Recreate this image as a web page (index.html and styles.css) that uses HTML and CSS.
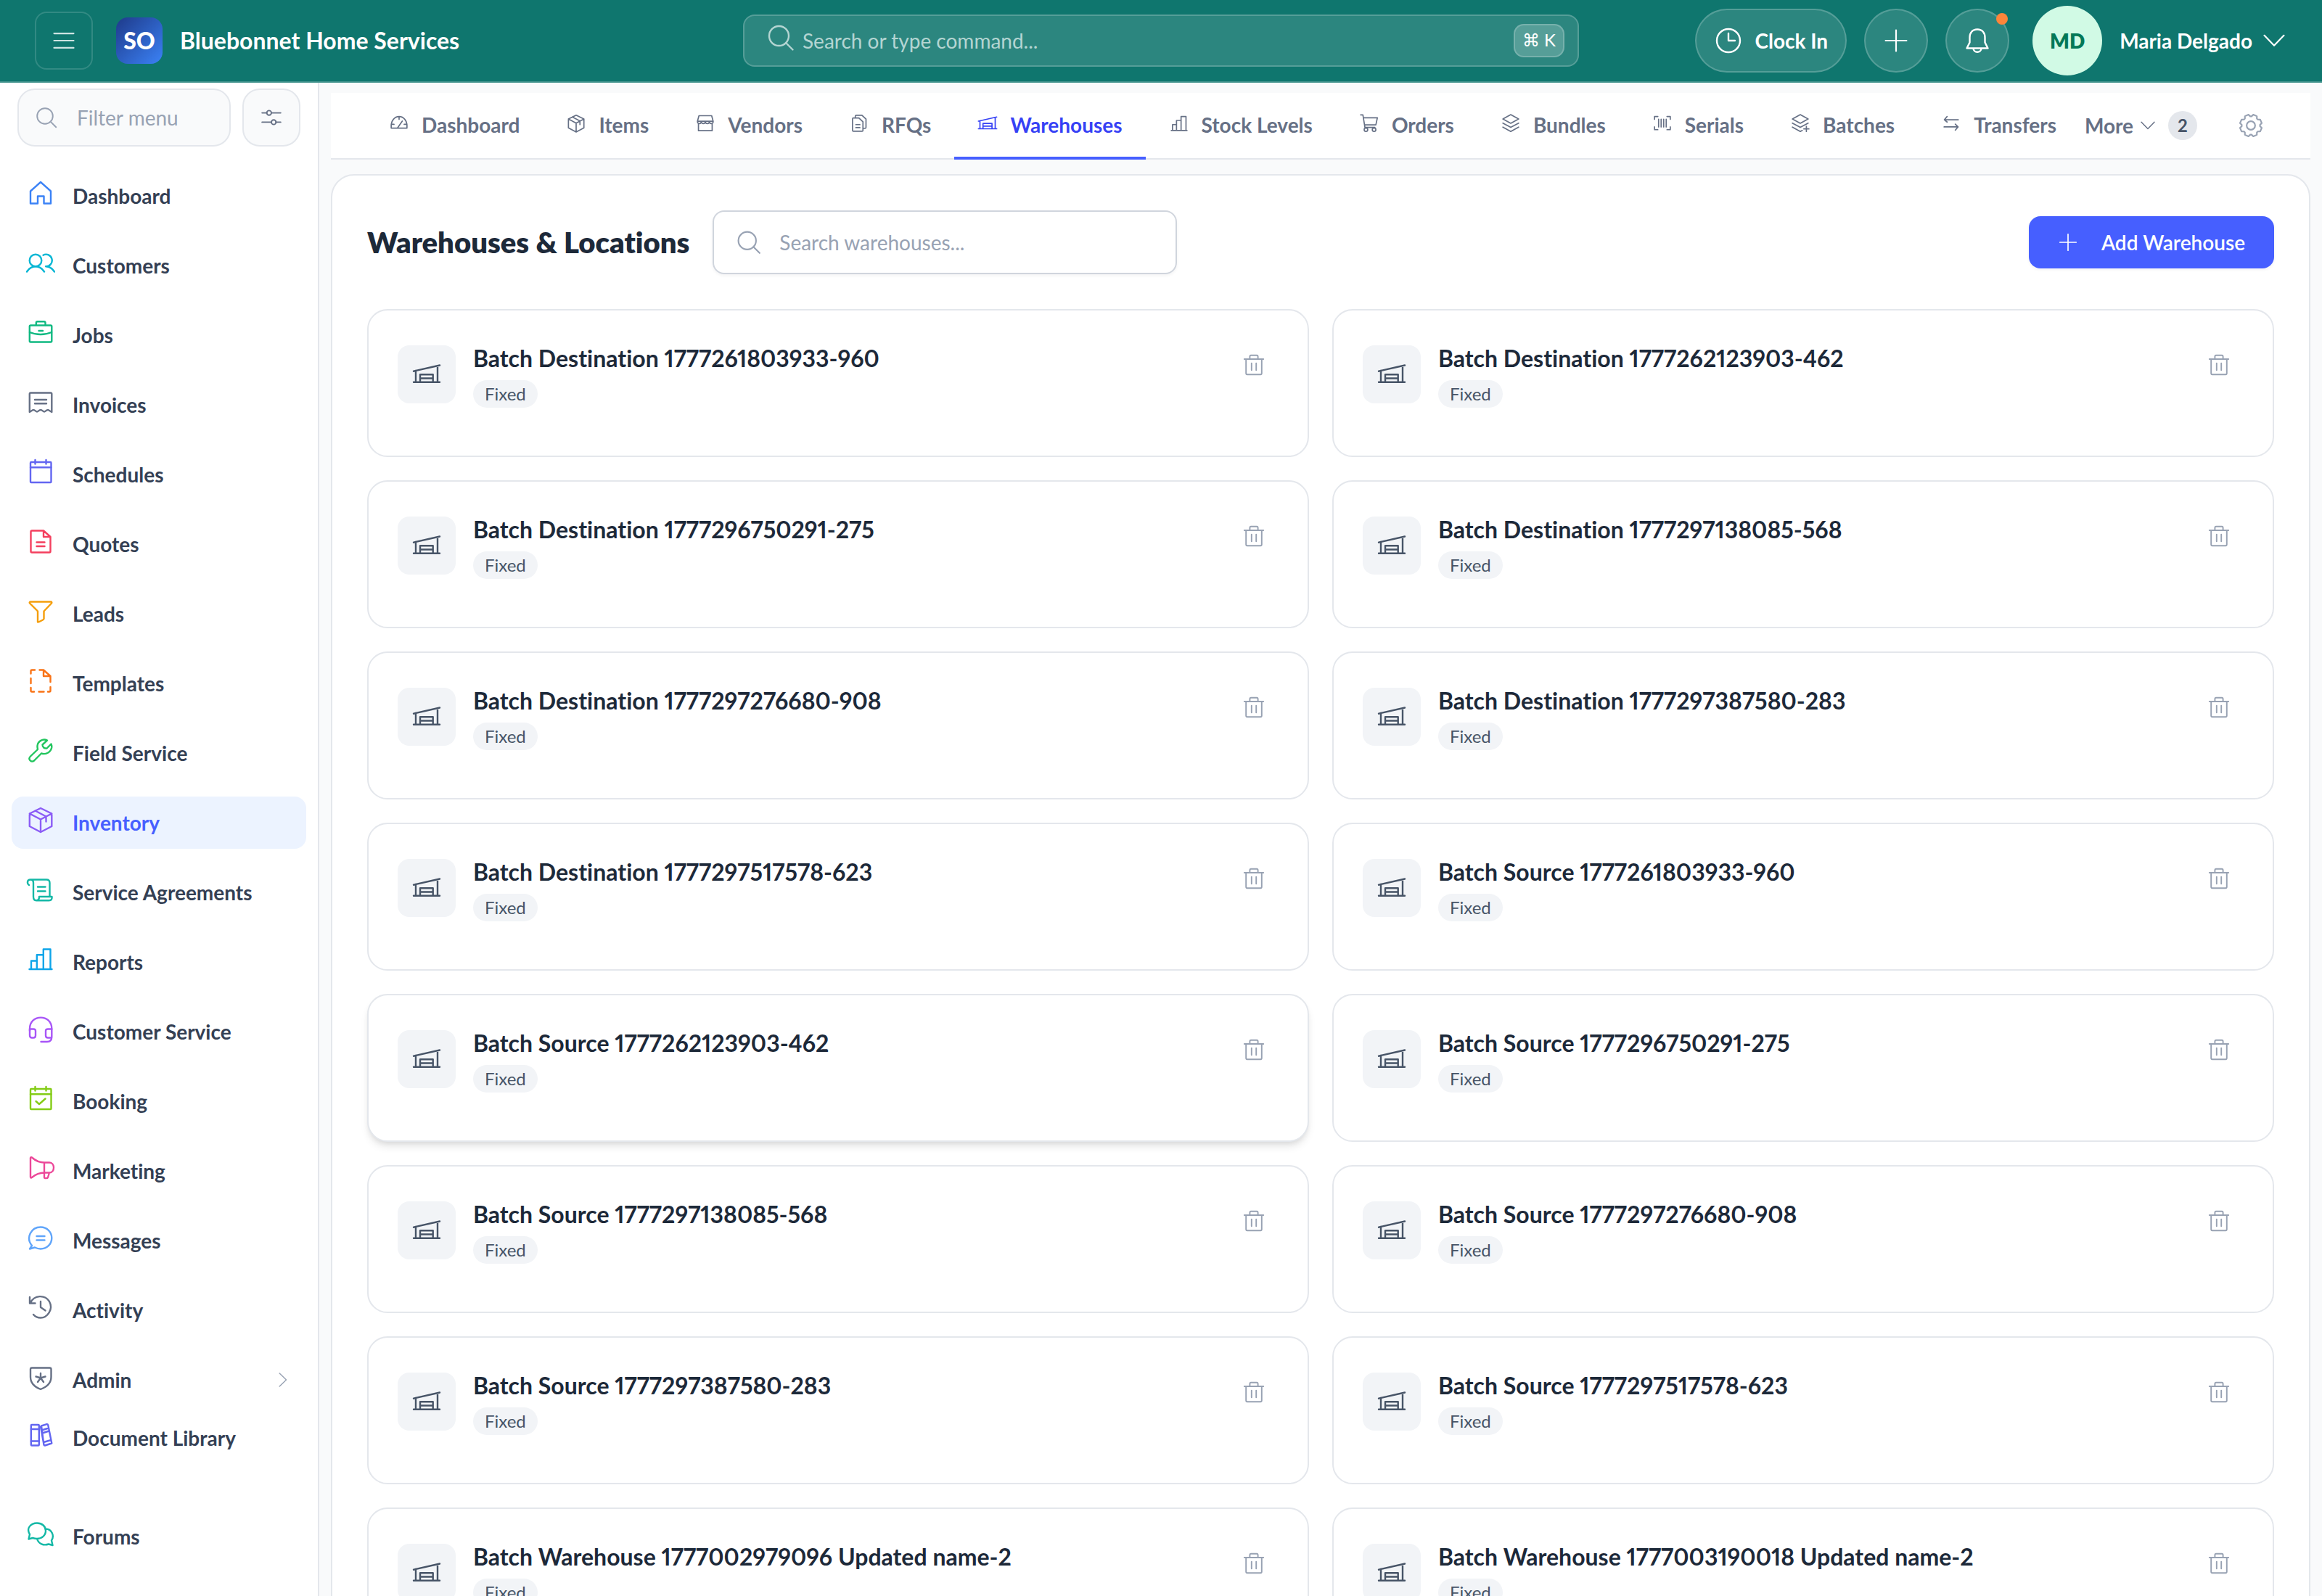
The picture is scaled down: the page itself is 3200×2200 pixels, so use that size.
FILE: index.html
```html
<!DOCTYPE html>
<html lang="en">
<head>
  <meta charset="UTF-8">
  <meta name="viewport" content="width=device-width, initial-scale=1">
  <title>Warehouses &amp; Locations</title>
  <link rel="stylesheet" href="styles.css">
</head>
<body>

<!-- icon sprite, every icon is drawn on a 40x40 box -->
<svg class="sprite" aria-hidden="true">
  <symbol id="i-menu" viewBox="0 0 40 40"><path d="M5 9H35M5 20H35M5 31H35"/></symbol>
  <symbol id="i-search" viewBox="0 0 40 40"><circle cx="17.500" cy="17.500" r="13.500"/><path d="M27 27L36.500 36.500"/></symbol>
  <symbol id="i-plus" viewBox="0 0 40 40"><path d="M20 4V36M4 20H36"/></symbol>
  <symbol id="i-clock" viewBox="0 0 40 40"><circle cx="20" cy="20" r="16"/><path d="M20 10V20H29"/></symbol>
  <symbol id="i-bell" viewBox="0 0 40 40"><path d="M20 4.500C13 4.500 9.500 9.500 9.500 15.500V22.500L5.500 30.500H34.500L30.500 22.500V15.500C30.500 9.500 27 4.500 20 4.500ZM14.500 30.500C14.500 37.500 25.500 37.500 25.500 30.500"/></symbol>
  <symbol id="i-down" viewBox="0 0 40 40"><path d="M5 12L20 27.500L35 12"/></symbol>
  <symbol id="i-right" viewBox="0 0 40 40"><path d="M12 5L27.500 20L12 35"/></symbol>
  <symbol id="i-sliders" viewBox="0 0 40 40"><path d="M4 12H12M20 12H36M4 28H20M28 28H36"/><circle cx="16" cy="12" r="4"/><circle cx="24" cy="28" r="4"/></symbol>
  <symbol id="i-home" viewBox="0 0 40 40"><path d="M6 34.500V17.500L20 5L34 17.500V34.500H24.500V24.500H16V34.500Z"/></symbol>
  <symbol id="i-users" viewBox="0 0 40 40"><circle cx="13" cy="17" r="8.300"/><path d="M1 32.500C4 28 8 25.300 13 25.300S22 28 25 32.500M23.500 9.700A8.300 8.300 0 1 1 27 25.300C32 25.300 36 28 39 32.500"/></symbol>
  <symbol id="i-case" viewBox="0 0 40 40"><rect x="4.800" y="10.500" width="30.500" height="23" rx="1.500"/><path d="M13.800 10V7C13.800 6 14.500 5.300 15.500 5.300H24.800C25.800 5.300 26.500 6 26.500 7V10M5 20C14 24 26 24 35 20M17.500 18H23"/></symbol>
  <symbol id="i-invoice" viewBox="0 0 40 40"><path d="M4.800 34V9C4.800 8 5.500 7.500 6.300 7.500H33.800C34.800 7.500 35.300 8 35.300 9V34C33 33 31.500 31 30 31C28 31 26.500 33.500 25 33.500C23.500 33.500 22 31 20 31C18 31 16.500 33.500 15 33.500C13.500 33.500 12 31 10 31C8.500 31 7 33 4.800 34ZM12 17H28M12 22.300H28"/></symbol>
  <symbol id="i-calendar" viewBox="0 0 40 40"><rect x="6" y="7" width="28.500" height="28" rx="1"/><path d="M6 14.300H34.500M12.500 4V9.500M27.500 4V9.500"/></symbol>
  <symbol id="i-calcheck" viewBox="0 0 40 40"><rect x="6" y="7" width="28.500" height="28" rx="1"/><path d="M6 14.300H34.500M12.500 4V9.500M27.500 4V9.500M13.500 24L18 28L26.500 20.500"/></symbol>
  <symbol id="i-doc" viewBox="0 0 40 40"><path d="M8 5.500H24L33.500 14V34C33.500 35 33 35.500 32 35.500H8C7 35.500 6.500 35 6.500 34V7C6.500 6 7 5.500 8 5.500ZM24 5.500V14H33.500M14.500 21.500H25.500M14.500 27H25.500"/></symbol>
  <symbol id="i-funnel" viewBox="0 0 40 40"><path d="M6 7.500H34.500C35.500 7.500 35.500 9 35 9.500L24.500 20.500V31C24.500 32 17 36 16 35.500V20.500L5 9.500C4.500 9 4.500 7.500 6 7.500Z"/></symbol>
  <symbol id="i-template" viewBox="0 0 40 40"><path d="M12 5.500H8C7 5.500 6.500 6 6.500 7V10.500M6.500 17V24M6.500 30V34C6.500 35 7 35.500 8 35.500H11M17.500 35.500H24.500M30 35.500H32C33 35.500 33.500 35 33.500 34V29M33.500 22V14L24 5.500H18.500M24 5.500V14H33.500"/></symbol>
  <symbol id="i-wrench" viewBox="0 0 40 40"><path d="M29 6.500C23 3.500 16 8 15.500 14C15.300 16 15.800 17.500 16 19L6 28.500C2 32.500 7 38 11 34.500L21 24.500C27 26.500 34 23 35.200 16.500C35.500 14 35 12.500 34.500 11.500L28.500 17.500C25 18 22.500 16 22.500 12.500Z"/></symbol>
  <symbol id="i-box" viewBox="0 0 40 40"><path d="M20 4L35.300 11.500V29L20 37L4.800 29V11.500ZM4.800 11.500L20 19.500L35.300 11.500M20 19.500V37M12.500 7.500L27.500 15.500V22.500"/></symbol>
  <symbol id="i-scroll" viewBox="0 0 40 40"><path d="M4 14C1 12 1 6.500 6 6.500H28C31 6.500 32.500 8 32.500 11V29.500M6 6.500C8.500 6.500 10 8 10 11V30C10 33 11 35.300 14 35.300H31.500C35 35.300 36 33 35.500 30H18C18 33 17 35.300 14 35.300M16 16.500H26.500M16 22.500H26.500"/></symbol>
  <symbol id="i-chart" viewBox="0 0 40 40"><path d="M4.500 34H35.500M7 34V22.500H14.800M14.800 34V14.300H23.800M23.800 34V6.500H33.500V34"/></symbol>
  <symbol id="i-headset" viewBox="0 0 40 40"><path d="M5 23V20C5 -0.500 35.300 -0.500 35.300 20V31C35.300 35.500 33 38 29 38H20.500"/><path d="M5 20.500H10C12 20.500 13 21.500 13 23V29.500C13 31.500 12 32.500 10 32.500H8C6 32.500 5 31 5 29ZM35.300 20.500H30C28 20.500 27 21.500 27 23V29.500C27 31.500 28 32.500 30 32.500H35"/></symbol>
  <symbol id="i-horn" viewBox="0 0 40 40"><path d="M6 6C6 5 7.500 5 8 5.500C14 11 20 12.500 25 12.500H32C40 12.500 40 26.500 32 26.500H25C20 26.500 14 28 8 33C7 34 6 33.500 6 32.500ZM25 12.500V33C25 34.500 29.500 34.500 30 33L32 26.500"/></symbol>
  <symbol id="i-message" viewBox="0 0 40 40"><path d="M8 31C-1 20 7 5.500 20 5.500C28.500 5.500 35.300 12 35.300 20.500C35.300 29 28.500 35.500 20 35.500C16.500 35.500 14 34.500 12 33.500L5 35.500ZM14.500 18H25.500M14.500 23.500H25.500"/></symbol>
  <symbol id="i-history" viewBox="0 0 40 40"><path d="M5 6V14.500H12.500M6 14C11 2.500 26 2.500 32 12C38 23 29 34.500 20 34.500C16 34.500 12.500 33 10 30M20 12V20L26.500 24.500"/></symbol>
  <symbol id="i-shield" viewBox="0 0 40 40"><path d="M6 9.500C6 8 6.500 7.500 8 7.500H32.500C34 7.500 34.500 8 34.500 9.500V20C34.500 29 28 34 20 37C12 34 6 29 6 20ZM20 15V21.500M13.500 19.500L20 21.500L26.500 19.500M16 27L20 21.500L24 27"/></symbol>
  <symbol id="i-books" viewBox="0 0 40 40"><rect x="6.800" y="6" width="11" height="28.500" rx="1"/><path d="M6.800 12H18M6.800 28.500H18M21 7.500L28.500 5.200C29.500 5 30 5.500 30.300 6.500L35.300 31.500L26 34.500C25 34.800 24.500 34 24.300 33ZM20 8.500L24.500 33.500M21.500 13.500L31 10.500M22.500 17.500L31.500 14.500M24 30L34.500 27"/></symbol>
  <symbol id="i-forum" viewBox="0 0 40 40"><path d="M5 21C-0.500 12 7 5.500 15 5.500C22 5.500 27 10 27 16C27 23 21 27 15 27C12 27 10.500 26.500 9 26L3.500 27.500ZM27 13.500C35 13.500 39.500 23 35 29.500L36.500 36L31 34.500C24 37 17 34 15 27"/></symbol>
  <symbol id="i-gauge" viewBox="0 0 40 40"><path d="M4.500 29.500C2 -1 38 -1 35.500 29.500ZM20 6.500V12M4.500 22H10M30 22H35.500M17 29L26.500 15.500"/></symbol>
  <symbol id="i-store" viewBox="0 0 40 40"><path d="M7.500 5H32.500L35.500 16C35.500 22 28 22 28 16C28 22 20 22 20 16C20 22 12 22 12 16C12 22 4.500 22 4.500 16ZM4.500 16H35.500M6.500 20V34.500H33.500V20"/></symbol>
  <symbol id="i-copy" viewBox="0 0 40 40"><path d="M8.500 9.500H19.500L27.500 17V34C27.500 35 27 35.500 26 35.500H8.500C7.500 35.500 7 35 7 34V11C7 10 7.500 9.500 8.500 9.500ZM12.500 9V6C12.500 5 13 4 14.500 4H25.500L33.500 11.500V28C33.500 29 33 30 31.500 30H28M13.500 22.500H21.500M13.500 28.500H21.500"/></symbol>
  <symbol id="i-warehouse" viewBox="0 0 40 40"><path d="M2 15.700L38 7.500M5 15V30.700M35 8.500V30.700M2 30.700H38M11 30.700V20.300H28.700V30.700M11 25.500H28.700"/></symbol>
  <symbol id="i-cart" viewBox="0 0 40 40"><path d="M3 3.300H7.500L11.500 28H31M8.500 9H36L33 23H10.800"/><circle cx="13.500" cy="32.500" r="3.500"/><circle cx="29.500" cy="32.500" r="3.500"/></symbol>
  <symbol id="i-layers" viewBox="0 0 40 40"><path d="M20 3L35.500 11.500L20 20L4.500 11.500ZM4.500 19.500L20 28L35.500 19.500M4.500 27.500L20 36L35.500 27.500"/></symbol>
  <symbol id="i-barcode" viewBox="0 0 40 40"><path d="M4.500 12V6.500H11M29 6.500H35.500V12M4.500 27V32.500H11M29 32.500H35.500V27M12.500 12V27M17.500 12V27M22.500 12V27M27.500 12V27"/></symbol>
  <symbol id="i-layersplus" viewBox="0 0 40 40"><path d="M20 3L35.500 11.500L20 20L4.500 11.500ZM4.500 19.500L20 28L35.500 19.500M4.500 27.500L20 36L24 34M32 26V36M27 31H37"/></symbol>
  <symbol id="i-swap" viewBox="0 0 40 40"><path d="M34 13H6.500M12 6.500L6.500 13L12 17.500M6 27H33.500M28 21.500L33.500 27L28 33.500"/></symbol>
  <symbol id="i-gear" viewBox="0 0 40 40"><circle cx="20" cy="20" r="6.500"/><path d="M21 6L23.700 3.400L29.100 5.700L29.200 9.400L30.600 10.800L34.300 10.900L36.600 16.300L34 19V21L36.600 23.700L34.300 29.100L30.600 29.200L29.200 30.600L29.100 34.300L23.700 36.600L21 34H19L16.300 36.600L10.900 34.300L10.800 30.600L9.400 29.200L5.700 29.100L3.400 23.700L6 21V19L3.400 16.300L5.700 10.900L9.400 10.800L10.800 9.400L10.900 5.700L16.300 3.400L19 6Z"/></symbol>
  <symbol id="i-trash" viewBox="0 0 40 40"><path d="M3.500 10H36.500M6.500 10V34.500C6.500 35.500 7 36.500 8.500 36.500H31.500C33 36.500 33.500 35.500 33.500 34.500V10M13 10V6C13 4.500 13.500 3.500 15 3.500H25C26.500 3.500 27 4.500 27 6V10M16 17V29M24 17V29"/></symbol>
</svg>

<header class="topbar">
  <div class="brand">
    <button class="menu-btn" aria-label="Toggle menu"><svg class="icon md"><use href="#i-menu"/></svg></button>
    <div class="logo">SO</div>
    <span class="brand-name">Bluebonnet Home Services</span>
  </div>
  <label class="command">
    <svg class="icon lg raised"><use href="#i-search"/></svg>
    <input type="text" placeholder="Search or type command..." aria-label="Search or type command">
    <kbd>⌘ K</kbd>
  </label>
  <div class="actions">
    <button class="pill clock"><svg class="icon lg"><use href="#i-clock"/></svg>Clock In</button>
    <button class="pill round" aria-label="Add"><svg class="icon md"><use href="#i-plus"/></svg></button>
    <button class="pill round" aria-label="Notifications"><svg class="icon lg"><use href="#i-bell"/></svg><span class="dot"></span></button>
    <button class="user"><span class="avatar">MD</span>Maria Delgado<svg class="icon md"><use href="#i-down"/></svg></button>
  </div>
</header>

<div class="layout">
  <aside class="sidebar">
    <div class="filter">
      <label class="filter-box">
        <svg class="icon sm"><use href="#i-search"/></svg>
        <input type="text" placeholder="Filter menu" aria-label="Filter menu">
      </label>
      <button class="filter-btn" aria-label="Menu options"><svg class="icon sm"><use href="#i-sliders"/></svg></button>
    </div>
    <nav class="nav">
      <a href="#"><svg class="icon lg c-blue"><use href="#i-home"/></svg>Dashboard</a>
      <a href="#"><svg class="icon lg c-cyan"><use href="#i-users"/></svg>Customers</a>
      <a href="#"><svg class="icon lg c-emerald"><use href="#i-case"/></svg>Jobs</a>
      <a href="#"><svg class="icon lg c-gray"><use href="#i-invoice"/></svg>Invoices</a>
      <a href="#"><svg class="icon lg c-indigo"><use href="#i-calendar"/></svg>Schedules</a>
      <a href="#"><svg class="icon lg c-rose"><use href="#i-doc"/></svg>Quotes</a>
      <a href="#"><svg class="icon lg c-amber"><use href="#i-funnel"/></svg>Leads</a>
      <a href="#"><svg class="icon lg c-orange"><use href="#i-template"/></svg>Templates</a>
      <a href="#"><svg class="icon lg c-green"><use href="#i-wrench"/></svg>Field Service</a>
      <a href="#" class="active"><svg class="icon lg c-violet"><use href="#i-box"/></svg>Inventory</a>
      <a href="#"><svg class="icon lg c-teal"><use href="#i-scroll"/></svg>Service Agreements</a>
      <a href="#"><svg class="icon lg c-sky"><use href="#i-chart"/></svg>Reports</a>
      <a href="#"><svg class="icon lg c-purple"><use href="#i-headset"/></svg>Customer Service</a>
      <a href="#"><svg class="icon lg c-lime"><use href="#i-calcheck"/></svg>Booking</a>
      <a href="#"><svg class="icon lg c-pink"><use href="#i-horn"/></svg>Marketing</a>
      <a href="#"><svg class="icon lg c-light"><use href="#i-message"/></svg>Messages</a>
      <a href="#"><svg class="icon lg c-gray"><use href="#i-history"/></svg>Activity</a>
      <a href="#" class="tight"><svg class="icon lg c-gray"><use href="#i-shield"/></svg>Admin<svg class="icon xs caret"><use href="#i-right"/></svg></a>
      <a href="#" class="last"><svg class="icon lg c-indigo"><use href="#i-books"/></svg>Document Library</a>
      <a href="#"><svg class="icon lg c-teal"><use href="#i-forum"/></svg>Forums</a>
    </nav>
  </aside>

  <main class="main">
    <div class="tabbar">
      <nav class="tabs">
        <a href="#"><svg class="icon tab"><use href="#i-gauge"/></svg>Dashboard</a>
        <a href="#"><svg class="icon tab"><use href="#i-box"/></svg>Items</a>
        <a href="#"><svg class="icon tab"><use href="#i-store"/></svg>Vendors</a>
        <a href="#"><svg class="icon tab"><use href="#i-copy"/></svg>RFQs</a>
        <a href="#" class="active"><svg class="icon tab"><use href="#i-warehouse"/></svg>Warehouses</a>
        <a href="#"><svg class="icon tab"><use href="#i-chart"/></svg>Stock Levels</a>
        <a href="#"><svg class="icon tab"><use href="#i-cart"/></svg>Orders</a>
        <a href="#"><svg class="icon tab"><use href="#i-layers"/></svg>Bundles</a>
        <a href="#"><svg class="icon tab"><use href="#i-barcode"/></svg>Serials</a>
        <a href="#"><svg class="icon tab"><use href="#i-layersplus"/></svg>Batches</a>
        <a href="#"><svg class="icon tab"><use href="#i-swap"/></svg>Transfers</a>
      </nav>
      <button class="more">More<svg class="icon xs"><use href="#i-down"/></svg><span class="count">2</span></button>
      <button class="settings" aria-label="Settings"><svg class="icon md"><use href="#i-gear"/></svg></button>
    </div>

    <section class="panel">
      <div class="panel-head">
        <h1>Warehouses &amp; Locations</h1>
        <label class="search">
          <svg class="icon md"><use href="#i-search"/></svg>
          <input type="text" placeholder="Search warehouses..." aria-label="Search warehouses">
        </label>
        <button class="add-btn"><svg class="icon tab"><use href="#i-plus"/></svg>Add Warehouse</button>
      </div>

      <div class="cards">
        <article class="card">
          <div class="tile"><svg class="icon lg"><use href="#i-warehouse"/></svg></div>
          <div class="info"><h2>Batch Destination 1777261803933-960</h2><span class="tag">Fixed</span></div>
          <button class="trash" aria-label="Delete"><svg class="icon sm"><use href="#i-trash"/></svg></button>
        </article>
        <article class="card">
          <div class="tile"><svg class="icon lg"><use href="#i-warehouse"/></svg></div>
          <div class="info"><h2>Batch Destination 1777262123903-462</h2><span class="tag">Fixed</span></div>
          <button class="trash" aria-label="Delete"><svg class="icon sm"><use href="#i-trash"/></svg></button>
        </article>
        <article class="card">
          <div class="tile"><svg class="icon lg"><use href="#i-warehouse"/></svg></div>
          <div class="info"><h2>Batch Destination 1777296750291-275</h2><span class="tag">Fixed</span></div>
          <button class="trash" aria-label="Delete"><svg class="icon sm"><use href="#i-trash"/></svg></button>
        </article>
        <article class="card">
          <div class="tile"><svg class="icon lg"><use href="#i-warehouse"/></svg></div>
          <div class="info"><h2>Batch Destination 1777297138085-568</h2><span class="tag">Fixed</span></div>
          <button class="trash" aria-label="Delete"><svg class="icon sm"><use href="#i-trash"/></svg></button>
        </article>
        <article class="card">
          <div class="tile"><svg class="icon lg"><use href="#i-warehouse"/></svg></div>
          <div class="info"><h2>Batch Destination 1777297276680-908</h2><span class="tag">Fixed</span></div>
          <button class="trash" aria-label="Delete"><svg class="icon sm"><use href="#i-trash"/></svg></button>
        </article>
        <article class="card">
          <div class="tile"><svg class="icon lg"><use href="#i-warehouse"/></svg></div>
          <div class="info"><h2>Batch Destination 1777297387580-283</h2><span class="tag">Fixed</span></div>
          <button class="trash" aria-label="Delete"><svg class="icon sm"><use href="#i-trash"/></svg></button>
        </article>
        <article class="card">
          <div class="tile"><svg class="icon lg"><use href="#i-warehouse"/></svg></div>
          <div class="info"><h2>Batch Destination 1777297517578-623</h2><span class="tag">Fixed</span></div>
          <button class="trash" aria-label="Delete"><svg class="icon sm"><use href="#i-trash"/></svg></button>
        </article>
        <article class="card">
          <div class="tile"><svg class="icon lg"><use href="#i-warehouse"/></svg></div>
          <div class="info"><h2>Batch Source 1777261803933-960</h2><span class="tag">Fixed</span></div>
          <button class="trash" aria-label="Delete"><svg class="icon sm"><use href="#i-trash"/></svg></button>
        </article>
        <article class="card hovered">
          <div class="tile"><svg class="icon lg"><use href="#i-warehouse"/></svg></div>
          <div class="info"><h2>Batch Source 1777262123903-462</h2><span class="tag">Fixed</span></div>
          <button class="trash" aria-label="Delete"><svg class="icon sm"><use href="#i-trash"/></svg></button>
        </article>
        <article class="card">
          <div class="tile"><svg class="icon lg"><use href="#i-warehouse"/></svg></div>
          <div class="info"><h2>Batch Source 1777296750291-275</h2><span class="tag">Fixed</span></div>
          <button class="trash" aria-label="Delete"><svg class="icon sm"><use href="#i-trash"/></svg></button>
        </article>
        <article class="card">
          <div class="tile"><svg class="icon lg"><use href="#i-warehouse"/></svg></div>
          <div class="info"><h2>Batch Source 1777297138085-568</h2><span class="tag">Fixed</span></div>
          <button class="trash" aria-label="Delete"><svg class="icon sm"><use href="#i-trash"/></svg></button>
        </article>
        <article class="card">
          <div class="tile"><svg class="icon lg"><use href="#i-warehouse"/></svg></div>
          <div class="info"><h2>Batch Source 1777297276680-908</h2><span class="tag">Fixed</span></div>
          <button class="trash" aria-label="Delete"><svg class="icon sm"><use href="#i-trash"/></svg></button>
        </article>
        <article class="card">
          <div class="tile"><svg class="icon lg"><use href="#i-warehouse"/></svg></div>
          <div class="info"><h2>Batch Source 1777297387580-283</h2><span class="tag">Fixed</span></div>
          <button class="trash" aria-label="Delete"><svg class="icon sm"><use href="#i-trash"/></svg></button>
        </article>
        <article class="card">
          <div class="tile"><svg class="icon lg"><use href="#i-warehouse"/></svg></div>
          <div class="info"><h2>Batch Source 1777297517578-623</h2><span class="tag">Fixed</span></div>
          <button class="trash" aria-label="Delete"><svg class="icon sm"><use href="#i-trash"/></svg></button>
        </article>
        <article class="card">
          <div class="tile"><svg class="icon lg"><use href="#i-warehouse"/></svg></div>
          <div class="info"><h2>Batch Warehouse 1777002979096 Updated name-2</h2><span class="tag">Fixed</span></div>
          <button class="trash" aria-label="Delete"><svg class="icon sm"><use href="#i-trash"/></svg></button>
        </article>
        <article class="card">
          <div class="tile"><svg class="icon lg"><use href="#i-warehouse"/></svg></div>
          <div class="info"><h2>Batch Warehouse 1777003190018 Updated name-2</h2><span class="tag">Fixed</span></div>
          <button class="trash" aria-label="Delete"><svg class="icon sm"><use href="#i-trash"/></svg></button>
        </article>
      </div>
    </section>
  </main>
</div>

</body>
</html>
```
FILE: styles.css
```css
* {
  box-sizing: border-box;
}
body {
  margin: 0;
  height: 100vh;
  display: flex;
  flex-direction: column;
  overflow: hidden;
  background: #f9fafb;
  color: #344054;
  font-family: Lato, "Liberation Sans", sans-serif;
  font-size: 28px;
  line-height: 40px;
  font-variant-ligatures: none;
  font-variant-numeric: proportional-nums;
}
button, input {
  font: inherit;
  color: inherit;
  background: none;
  border: 0;
  padding: 0;
  margin: 0;
  outline: none;
}
button {
  cursor: pointer;
}
input {
  flex: 1;
  min-width: 0;
}
a {
  color: inherit;
  text-decoration: none;
}
h1, h2 {
  margin: 0;
}

/* icons */
.sprite {
  position: absolute;
  width: 0;
  height: 0;
}
.icon {
  flex: none;
  fill: none;
  stroke: currentColor;
  stroke-width: 2.4;
  stroke-linecap: round;
  stroke-linejoin: round;
}
.lg { width: 40px; height: 40px; }
.md { width: 36px; height: 36px; }
.sm { width: 32px; height: 32px; }
.tab { width: 28px; height: 28px; }
.xs { width: 24px; height: 24px; }
.raised { margin-bottom: 8px; }

.c-blue { color: #3b82f6; }
.c-cyan { color: #06b6d4; }
.c-emerald { color: #10b981; }
.c-gray { color: #667085; }
.c-indigo { color: #6366f1; }
.c-rose { color: #f43f5e; }
.c-amber { color: #f59e0b; }
.c-orange { color: #f97316; }
.c-green { color: #22c55e; }
.c-violet { color: #8b5cf6; }
.c-teal { color: #14b8a6; }
.c-sky { color: #0ea5e9; }
.c-purple { color: #a855f7; }
.c-lime { color: #84cc16; }
.c-pink { color: #ec4899; }
.c-light { color: #60a5fa; }

/* top bar */
.topbar {
  flex: none;
  height: 114px;
  display: grid;
  grid-template-columns: 1fr minmax(0, 1152px) 1fr;
  align-items: center;
  padding: 0 48px;
  background: #0f766e;
  border-bottom: 2px solid #3f918b;
  color: #fff;
}
.brand {
  display: flex;
  align-items: center;
}
.menu-btn {
  width: 80px;
  height: 80px;
  display: flex;
  align-items: center;
  justify-content: center;
  border: 2px solid rgba(255, 255, 255, 0.15);
  border-radius: 16px;
  color: #cfe4e2;
}
.logo {
  width: 64px;
  height: 64px;
  margin: 0 24px 0 32px;
  border-radius: 16px;
  background: linear-gradient(135deg, #1e3a8a, #3b82f6);
  font-size: 32px;
  font-weight: 900;
  line-height: 64px;
  text-align: center;
}
.brand-name {
  font-size: 32px;
  font-weight: 700;
}
.command {
  height: 72px;
  display: flex;
  align-items: center;
  gap: 10px;
  padding: 0 18px 0 30px;
  background: rgba(255, 255, 255, 0.12);
  border: 2px solid rgba(255, 255, 255, 0.2);
  border-radius: 16px;
  color: #b4d5d2;
}
.command input::placeholder {
  color: #b4d5d2;
  opacity: 1;
}
.command kbd {
  height: 46px;
  padding: 0 10px;
  background: rgba(255, 255, 255, 0.2);
  border: 2px solid rgba(255, 255, 255, 0.2);
  border-radius: 14px;
  color: #fff;
  font-family: Lato, "DejaVu Sans", sans-serif;
  font-size: 24px;
  line-height: 40px;
}
.actions {
  display: flex;
  align-items: center;
  justify-content: flex-end;
  gap: 24px;
  font-weight: 700;
}
.pill {
  position: relative;
  height: 88px;
  display: flex;
  align-items: center;
  justify-content: center;
  background: rgba(255, 255, 255, 0.12);
  border: 2px solid rgba(255, 255, 255, 0.2);
  border-radius: 44px;
}
.clock {
  gap: 16px;
  padding: 0 24px;
}
.round {
  width: 88px;
}
.dot {
  position: absolute;
  top: 4px;
  right: 0;
  width: 16px;
  height: 16px;
  border-radius: 50%;
  background: #fd853a;
}
.user {
  display: flex;
  align-items: center;
  margin-left: 8px;
}
.user .icon {
  margin-left: 12px;
}
.avatar {
  width: 96px;
  height: 96px;
  margin-right: 24px;
  border-radius: 50%;
  background: #d1fae5;
  color: #047857;
  font-weight: 800;
  line-height: 96px;
  text-align: center;
}

.layout {
  flex: 1;
  min-height: 0;
  display: flex;
}

/* sidebar */
.sidebar {
  flex: none;
  width: 440px;
  background: #fff;
  border-right: 2px solid #e4e7ec;
}
.filter {
  display: flex;
  gap: 16px;
  padding: 8px 24px 0;
}
.filter-box, .filter-btn {
  height: 80px;
  display: flex;
  align-items: center;
  background: #f9fafb;
  border: 2px solid #e4e7ec;
  border-radius: 24px;
  color: #98a2b3;
}
.filter-box {
  flex: 1;
  min-width: 0;
  gap: 26px;
  padding: 0 22px;
}
.filter-box input::placeholder {
  color: #98a2b3;
  opacity: 1;
}
.filter-btn {
  width: 80px;
  justify-content: center;
  color: #667085;
}
.nav {
  display: flex;
  flex-direction: column;
  gap: 24px;
  padding: 32px 16px;
  font-weight: 700;
}
.nav a {
  height: 72px;
  display: flex;
  align-items: center;
  gap: 24px;
  padding: 0 20px;
  border-radius: 16px;
}
.nav .icon.lg {
  margin-bottom: 8px;
}
.nav .active {
  background: #ecf3ff;
  color: #465fff;
}
.nav .tight {
  margin-bottom: -16px;
}
.nav .last {
  margin-bottom: 40px;
}
.caret {
  margin-left: auto;
  color: #98a2b3;
}

/* content */
.main {
  flex: 1;
  min-width: 0;
  overflow: hidden;
  padding: 14px 16px 0;
}
.tabbar {
  height: 92px;
  display: flex;
  align-items: stretch;
  padding: 0 64px 0 48px;
  background: #fff;
  border-bottom: 2px solid #e4e7ec;
  color: #667085;
  font-weight: 700;
}
.tabs {
  flex: 1;
  min-width: 0;
  display: flex;
  overflow: hidden;
  margin-bottom: -2px;
}
.tabs a {
  flex: none;
  display: flex;
  align-items: center;
  gap: 17px;
  padding: 0 32px;
  border-bottom: 4px solid transparent;
}
.tabs .icon {
  margin-bottom: 4px;
}
.tabs .active {
  color: #3641f5;
  border-color: #465fff;
}
.more {
  display: flex;
  align-items: center;
  margin-left: 32px;
}
.more .icon {
  margin: 0 16px 0 8px;
}
.count {
  width: 40px;
  height: 40px;
  border-radius: 50%;
  background: #e4e7ec;
  color: #475467;
  font-size: 24px;
  font-weight: 700;
}
.settings {
  display: flex;
  align-items: center;
  margin-left: 56px;
  color: #98a2b3;
}
.panel {
  margin-top: 20px;
  padding: 48px;
  background: #fff;
  border: 2px solid #e4e7ec;
  border-radius: 32px;
}
.panel-head {
  display: flex;
  align-items: center;
  gap: 32px;
  margin-bottom: 48px;
}
h1 {
  color: #1d2939;
  font-size: 40px;
  font-weight: 800;
  line-height: 56px;
}
.search {
  width: 640px;
  height: 88px;
  display: flex;
  align-items: center;
  gap: 24px;
  padding: 0 30px;
  border: 2px solid #d0d5dd;
  border-radius: 16px;
  box-shadow: 0 2px 4px rgba(16, 24, 40, 0.05);
  color: #98a2b3;
}
.search input::placeholder {
  color: #98a2b3;
  opacity: 1;
}
.add-btn {
  height: 72px;
  display: flex;
  align-items: center;
  gap: 32px;
  margin-left: auto;
  padding: 0 40px;
  background: #465fff;
  border-radius: 16px;
  box-shadow: 0 2px 4px rgba(16, 24, 40, 0.05);
  color: #fff;
  font-weight: 600;
}
.cards {
  display: grid;
  grid-template-columns: 1fr 1fr;
  gap: 32px;
}
.card {
  min-height: 204px;
  display: flex;
  align-items: flex-start;
  gap: 24px;
  padding: 48px 40px;
  background: #fff;
  border: 2px solid #e4e7ec;
  border-radius: 28px;
}
.card.hovered {
  box-shadow: 0 8px 12px -2px rgba(0, 0, 0, 0.1), 0 4px 8px -4px rgba(0, 0, 0, 0.1);
}
.tile {
  width: 80px;
  height: 80px;
  display: flex;
  align-items: center;
  justify-content: center;
  background: #f2f4f7;
  border-radius: 16px;
  color: #475467;
}
.info {
  flex: 1;
  min-width: 0;
}
h2 {
  color: #1d2939;
  font-size: 32px;
  font-weight: 700;
  line-height: 36px;
}
.tag {
  display: block;
  width: max-content;
  margin-top: 12px;
  padding: 0 16px;
  background: #f2f4f7;
  border-radius: 20px;
  color: #475467;
  font-size: 24px;
  line-height: 38px;
}
.trash {
  display: flex;
  padding: 11px 18px;
  color: #98a2b3;
}
```
